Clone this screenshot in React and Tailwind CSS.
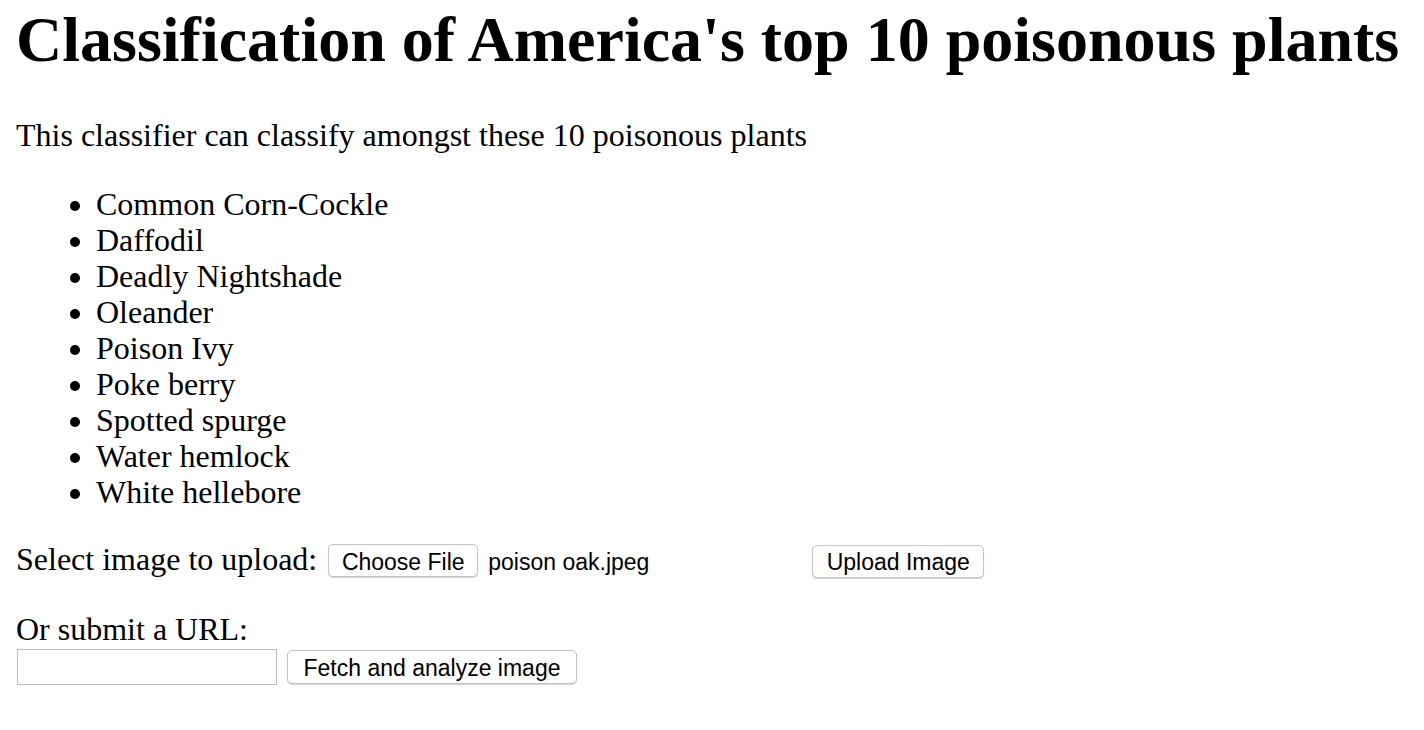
import React, { useState } from 'react';

const plants = [
  'Common Corn-Cockle',
  'Daffodil',
  'Deadly Nightshade',
  'Oleander',
  'Poison Ivy',
  'Poke berry',
  'Spotted spurge',
  'Water hemlock',
  'White hellebore',
];

// boton con el estilo nativo de mac
function NativeButton({ children, className = '' }) {
  return (
    <button
      type="button"
      className={`bg-white border border-[#c4c4c4] rounded-[5px] shadow-[0_1px_1px_rgba(0,0,0,0.18)] text-[23px] leading-none text-black font-['Liberation_Sans',Arial,sans-serif] px-[12px] pt-[3px] ${className}`}
    >
      {children}
    </button>
  );
}

export default function App() {
  const [url, setUrl] = useState('');

  return (
    <div className="min-h-screen bg-white text-black px-4 font-['Liberation_Serif','Times_New_Roman',serif] text-[32px] leading-[36px]">
      <h1 className="pt-[3px] text-[64px] leading-[74px] font-bold whitespace-nowrap">
        Classification of America's top 10 poisonous plants
      </h1>

      <p className="mt-[40px]">This classifier can classify amongst these 10 poisonous plants</p>

      <ul className="mt-[33px] list-disc pl-[80px]">
        {plants.map((plant) => (
          <li key={plant}>{plant}</li>
        ))}
      </ul>

      {/* Subir imagen */}
      <form className="mt-[31px]" onSubmit={(e) => e.preventDefault()}>
        <div className="flex items-center h-[36px]">
          <span className="whitespace-nowrap">Select image to upload:</span>
          <NativeButton className="ml-[11px] h-[33px] w-[150px] mt-[3px]">Choose File</NativeButton>
          <span className="ml-[10px] w-[324px] mt-[6px] text-[23px] leading-none font-['Liberation_Sans',Arial,sans-serif]">
            poison oak.jpeg
          </span>
          <NativeButton className="h-[33px] w-[172px] mt-[4px]">Upload Image</NativeButton>
        </div>
      </form>

      {/* Enviar URL */}
      <form className="mt-[34px]" onSubmit={(e) => e.preventDefault()}>
        <div>Or submit a URL:</div>
        <div className="flex items-center mt-[2px]">
          <input
            type="text"
            value={url}
            onChange={(e) => setUrl(e.target.value)}
            className="ml-[1px] w-[260px] h-[36px] border border-[#bdbdbd] outline-none px-1 text-[22px] font-['Liberation_Sans',Arial,sans-serif]"
          />
          <NativeButton className="ml-[10px] h-[34px] w-[290px]">Fetch and analyze image</NativeButton>
        </div>
      </form>
    </div>
  );
}
